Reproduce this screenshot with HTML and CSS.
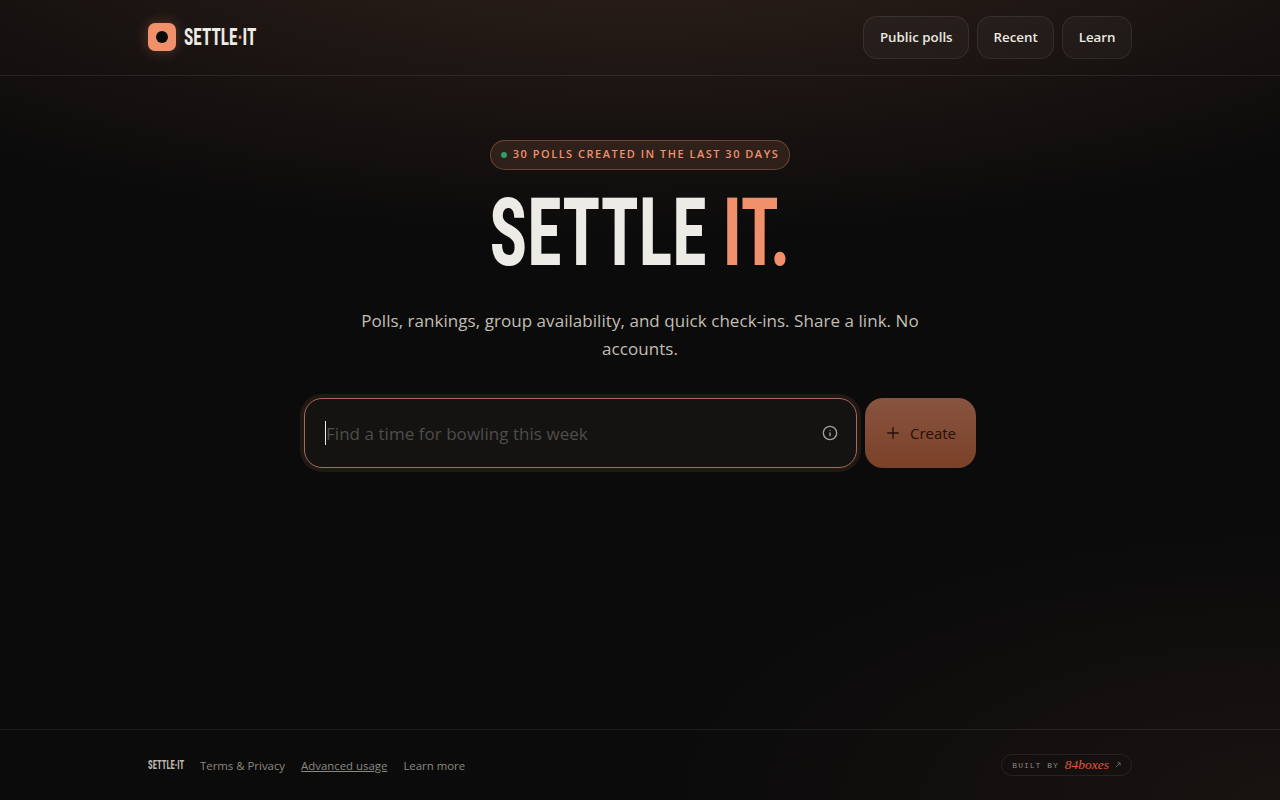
FILE: index.html
```html
<!doctype html>
<html>
  <head>
    <title>Settle It</title>
    <link rel="stylesheet" href="styles.css">
  </head>
  <body>
    <header class="topbar">
      <div class="topbar-inner">
        <a class="brand" href="#">
          <span class="brand-mark"><span class="brand-dot"></span></span>
          <span class="brand-name">SETTLE<span class="brand-sep">·</span>IT</span>
        </a>
        <nav class="nav">
          <a class="nav-btn" href="#">Public polls</a>
          <a class="nav-btn" href="#">Recent</a>
          <a class="nav-btn" href="#">Learn</a>
        </nav>
      </div>
    </header>

    <main class="hero">
      <div class="pill">
        <span class="pill-dot"></span>
        <span class="pill-text">30 POLLS CREATED IN THE LAST 30 DAYS</span>
      </div>
      <h1 class="title">SETTLE <span class="title-accent">IT.</span></h1>
      <p class="lead">Polls, rankings, group availability, and quick check-ins. Share a link. No accounts.</p>

      <form class="create">
        <div class="create-input">
          <span class="caret"></span>
          <span class="placeholder">Find a time for bowling this week</span>
          <svg class="info" width="16" height="16" viewBox="0 0 24 24" fill="none" stroke="currentColor" stroke-width="2" stroke-linecap="round">
            <circle cx="12" cy="12" r="10"></circle>
            <path d="M12 16v-4"></path>
            <path d="M12 8h.01"></path>
          </svg>
        </div>
        <button class="create-btn" type="button">
          <svg width="16" height="16" viewBox="0 0 24 24" fill="none" stroke="currentColor" stroke-width="2" stroke-linecap="round">
            <path d="M12 4v16"></path>
            <path d="M4 12h16"></path>
          </svg>
          <span>Create</span>
        </button>
      </form>
    </main>

    <footer class="footer">
      <div class="footer-inner">
        <div class="footer-links">
          <span class="footer-brand">SETTLE·IT</span>
          <a href="#">Terms &amp; Privacy</a>
          <a class="underlined" href="#">Advanced usage</a>
          <a href="#">Learn more</a>
        </div>
        <a class="built" href="#">
          <span class="built-label">BUILT BY</span>
          <span class="built-name">84boxes</span>
          <svg width="6" height="6" viewBox="0 0 10 10" fill="none" stroke="currentColor" stroke-width="1.6">
            <path d="M1.5 8.5L8 2"></path>
            <path d="M4 1.5h4.5V6"></path>
          </svg>
        </a>
      </div>
    </footer>
  </body>
</html>
```

FILE: styles.css
```css
:root {
  --bg: #0b0b0b;
  --cream: #ecebe5;
  --accent: #f0916c;
  --border: rgba(255, 255, 255, 0.08);
}

* {
  box-sizing: border-box;
}

html,
body {
  height: 100%;
}

body {
  margin: 0;
  display: flex;
  flex-direction: column;
  min-height: 800px;
  font-family: "Open Sans", "Noto Sans", sans-serif;
  color: var(--cream);
  background-color: var(--bg);
  background-image:
    radial-gradient(ellipse 80% 45% at 50% -15%, rgba(240, 145, 108, 0.18), transparent 100%),
    radial-gradient(ellipse 50% 35% at 100% 100%, rgba(240, 145, 108, 0.06), transparent 100%);
  overflow: hidden;
}

a {
  color: inherit;
  text-decoration: none;
}

.topbar {
  height: 76px;
  padding-bottom: 1px;
  border-bottom: 1px solid var(--border);
}

.topbar-inner,
.footer-inner {
  width: 984px;
  margin: 0 auto;
  height: 100%;
  display: flex;
  align-items: center;
  justify-content: space-between;
}

.brand {
  display: flex;
  align-items: center;
  gap: 8px;
}

.brand-mark {
  width: 28px;
  height: 28px;
  border-radius: 7px;
  background: var(--accent);
  box-shadow: 0 0 14px rgba(240, 145, 108, 0.3);
  display: flex;
  align-items: center;
  justify-content: center;
}

.brand-dot {
  width: 12px;
  height: 12px;
  border-radius: 50%;
  background: #0a0a0a;
}

.brand-name {
  display: inline-block;
  font-family: "Roboto", sans-serif;
  font-weight: 700;
  font-stretch: 75%;
  font-size: 24px;
  line-height: 28px;
  transform: scaleX(0.72);
  transform-origin: left center;
}

.brand-sep {
  color: var(--accent);
}

.nav {
  display: flex;
  gap: 8px;
}

.nav-btn {
  height: 43px;
  padding: 0 15.5px;
  display: flex;
  align-items: center;
  font-size: 13.3px;
  font-weight: 600;
  border-radius: 14px;
  border: 1px solid var(--border);
  background: rgba(255, 255, 255, 0.03);
  color: #ece9e2;
}

.hero {
  flex: 1;
  display: flex;
  flex-direction: column;
  align-items: center;
  padding-top: 64px;
}

.pill {
  height: 30px;
  padding: 0 10px;
  display: flex;
  align-items: center;
  gap: 6px;
  border-radius: 15px;
  border: 1px solid rgba(240, 145, 108, 0.32);
  background: rgba(240, 145, 108, 0.12);
  color: var(--accent);
  font-size: 11px;
  font-weight: 600;
  letter-spacing: 1.5px;
}

.pill-text {
  padding-bottom: 3px;
}

.pill-dot {
  width: 6px;
  height: 6px;
  border-radius: 50%;
  background: #2f9e6b;
}

.title {
  margin: 16px 0 0;
  font-family: "Roboto", sans-serif;
  font-size: 94px;
  font-weight: 700;
  font-stretch: 75%;
  line-height: 94px;
  color: var(--cream);
  transform: scaleX(0.745);
}

.title-accent {
  color: var(--accent);
}

.lead {
  margin: 27px 0 0;
  width: 600px;
  text-align: center;
  font-size: 17px;
  letter-spacing: 0.05px;
  line-height: 28px;
  color: #c2beb4;
}

.create {
  margin-top: 35px;
  display: flex;
  gap: 8px;
}

.create-input {
  width: 553px;
  height: 70px;
  padding: 0 18px 0 20px;
  display: flex;
  align-items: center;
  border-radius: 18px;
  border: 1px solid #a86a58;
  background: #141312;
  box-shadow: 0 0 0 4px rgba(240, 145, 108, 0.1);
}

.caret {
  width: 1px;
  height: 24px;
  background: #f0eee8;
}

.placeholder {
  flex: 1;
  font-size: 17px;
  letter-spacing: 0.04px;
  color: #4f4d49;
}

.info {
  color: #a5a29b;
}

.create-btn {
  width: 111px;
  height: 70px;
  display: flex;
  align-items: center;
  justify-content: center;
  gap: 9px;
  border: none;
  border-radius: 18px;
  font-family: inherit;
  font-size: 15px;
  font-weight: 500;
  color: #24100a;
  background: linear-gradient(180deg, #885440, #7b4128);
}

.footer {
  height: 71px;
  border-top: 1px solid var(--border);
}

.footer-links {
  display: flex;
  align-items: center;
  gap: 16px;
  font-size: 11.4px;
  color: #8b8882;
}

.footer-brand {
  display: inline-block;
  width: 36px;
  font-family: "Roboto", sans-serif;
  font-size: 12px;
  font-weight: 700;
  font-stretch: 75%;
  white-space: nowrap;
  color: #bdb9b0;
  transform: scaleX(0.72);
  transform-origin: left center;
}

.underlined {
  text-decoration: underline;
}

.built {
  height: 22px;
  padding: 0 10px;
  display: flex;
  align-items: center;
  gap: 6px;
  border-radius: 11px;
  border: 1px solid var(--border);
  color: #6e6b66;
}

.built-label {
  font-family: "Liberation Mono", monospace;
  font-size: 8px;
  letter-spacing: 1px;
  color: #8b8882;
}

.built-name {
  font-family: "Liberation Serif", serif;
  font-style: italic;
  font-size: 13.5px;
  color: #e5533f;
}
```
